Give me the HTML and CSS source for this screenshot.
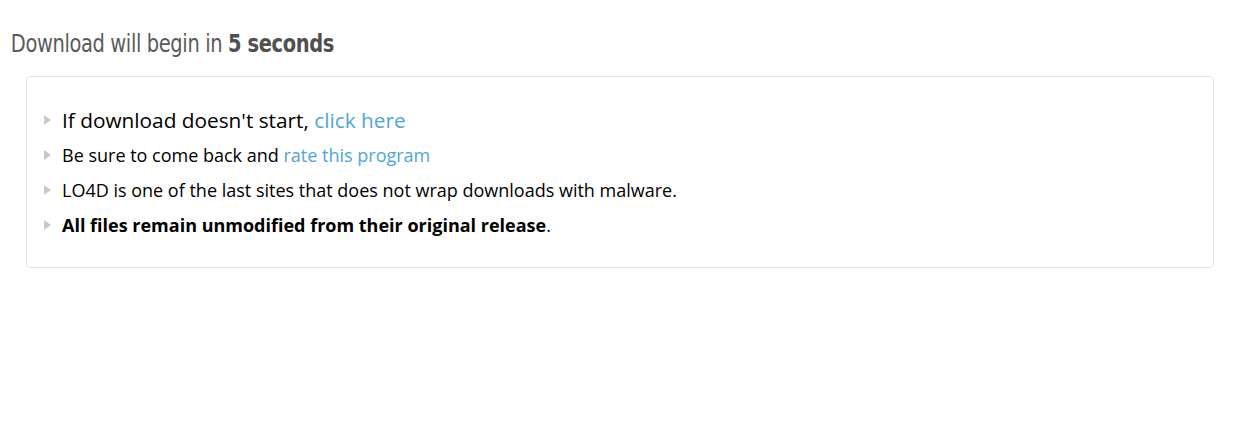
FILE: index.html
```html
<!DOCTYPE html>
<html>
<head>
<meta charset="utf-8">
<link rel="stylesheet" href="styles.css">
</head>
<body>
<h2 class="title">Download will begin in <b>5 seconds</b></h2>
<div class="box">
  <ul class="list">
    <li class="item big"><span class="tri"></span><span>If download doesn't start, <a href="#">click here</a></span></li>
    <li class="item"><span class="tri"></span><span>Be sure to come back and <a href="#">rate this program</a></span></li>
    <li class="item"><span class="tri"></span><span>LO4D is one of the last sites that does not wrap downloads with malware.</span></li>
    <li class="item"><span class="tri"></span><span><b>All files remain unmodified from their original release</b>.</span></li>
  </ul>
</div>
</body>
</html>
```
FILE: styles.css
```css
body {
  margin: 0;
  background: #fff;
  font-family: "Open Sans", "Noto Sans", sans-serif;
  color: #000;
}
.title {
  margin: 0;
  padding: 28px 0 0 12px;
  height: 48px;
  box-sizing: border-box;
  font-family: "DejaVu Sans", sans-serif;
  font-stretch: condensed;
  font-weight: normal;
  font-size: 24px;
  letter-spacing: -0.4px;
  line-height: 32px;
  color: #5a5a5a;
  transform: scaleX(0.9);
  transform-origin: left center;
}
.title b {
  font-weight: bold;
  color: #505050;
}
.box {
  margin: 28px 23px 0 26px;
  height: 192px;
  box-sizing: border-box;
  border: 1px solid #e5e5e5;
  border-radius: 4px;
  padding: 25px 0 0 17px;
}
.list {
  list-style: none;
  margin: 0;
  padding: 0;
  display: flex;
  flex-direction: column;
}
.item {
  display: flex;
  align-items: center;
  height: 35px;
  font-size: 18px;
}
.item.big {
  font-size: 20.8px;
}
.tri {
  width: 0;
  height: 0;
  border-left: 7px solid #c8c8c8;
  border-top: 5px solid transparent;
  border-bottom: 5px solid transparent;
  margin-right: 11px;
  flex: none;
}
.item b {
  font-weight: bold;
}
a {
  color: #4ea6d9;
  text-decoration: none;
}
```
